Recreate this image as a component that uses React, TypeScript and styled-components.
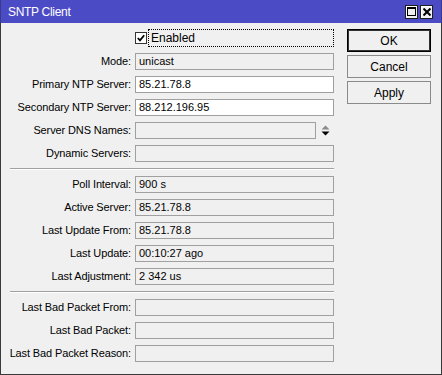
import React from "react";
import styled, { createGlobalStyle } from "styled-components";

const Global = createGlobalStyle`
  html, body { margin: 0; padding: 0; background: #f0f0f0; overflow: hidden; }
  * { box-sizing: border-box; }
`;

const Window = styled.div`
  width: 442px;
  height: 375px;
  border: 1px solid #3a3a3a;
  border-top: none;
  background: #f0f0f0;
  font-family: "Liberation Sans", Arial, sans-serif;
  font-size: 11px;
  color: #000;
  display: flex;
  flex-direction: column;
`;

const TitleBar = styled.div`
  height: 23px;
  margin: 0 -1px;
  background: #4b4bc6;
  display: flex;
  align-items: center;
  justify-content: space-between;
  padding: 0 8px 0 7px;
  border-left: 1px solid #3a3a8a;
  border-right: 1px solid #3a3a8a;
`;

const Title = styled.div`
  color: #fff;
  font-size: 12px;
  letter-spacing: -0.3px;
`;

const TitleButtons = styled.div`
  display: flex;
  gap: 2px;
`;

const TitleBtn = styled.div`
  width: 13px;
  height: 14px;
  background: #f0f0f0;
  border: 1px solid #1e1e1e;
  box-shadow: inset 1px 1px 0 #fff;
  display: flex;
  align-items: center;
  justify-content: center;
`;

const Body = styled.div`
  display: flex;
  gap: 13px;
  padding-top: 6px;
`;

const Form = styled.div`
  width: 333px;
  display: flex;
  flex-direction: column;
  gap: 6px;
`;

const Row = styled.div`
  display: grid;
  grid-template-columns: 130px 199px;
  column-gap: 4px;
  align-items: center;
`;

const Label = styled.div`
  text-align: right;
  white-space: nowrap;
  line-height: 17px;
  letter-spacing: -0.12px;
`;

const Field = styled.div<{ $editable?: boolean }>`
  height: 17px;
  border: 1px solid #a0a0a0;
  background: ${(p) => (p.$editable ? "#fff" : "#f0f0f0")};
  padding-left: 3px;
  line-height: 15px;
  white-space: nowrap;
  overflow: hidden;
  flex: 1;
`;

const FieldWrap = styled.div`
  display: flex;
  align-items: center;
`;

const Spinner = styled.div`
  width: 18px;
  display: flex;
  justify-content: center;
`;

const CheckRow = styled.div`
  display: flex;
  align-items: center;
  height: 18px;
`;

const CheckBox = styled.div`
  width: 12px;
  height: 12px;
  border: 1px solid #333;
  background: #fff;
  display: flex;
  align-items: center;
  justify-content: center;
  margin-right: 1px;
`;

const FocusLabel = styled.div`
  flex: 1;
  height: 18px;
  border: 1px dotted #000;
  padding-left: 2px;
  line-height: 16px;
  font-size: 12px;
`;

const Separator = styled.div`
  margin-left: 9px;
  height: 2px;
  border-top: 1px solid #a0a0a0;
  border-bottom: 1px solid #fff;
`;

const Actions = styled.div`
  width: 84px;
  display: flex;
  flex-direction: column;
  gap: 3px;
`;

const Button = styled.div<{ $default?: boolean }>`
  height: 23px;
  border: 1px solid ${(p) => (p.$default ? "#000" : "#8a8a8a")};
  box-shadow: ${(p) => (p.$default ? "inset 0 0 0 1px #333" : "none")};
  background: #f0f0f0;
  display: flex;
  align-items: center;
  justify-content: center;
  padding-top: 1px;
  font-size: 12px;
`;

type Item = { label: string; value?: string; editable?: boolean; spinner?: boolean };

const section1: Item[] = [
  { label: "Mode:", value: "unicast" },
  { label: "Primary NTP Server:", value: "85.21.78.8", editable: true },
  { label: "Secondary NTP Server:", value: "88.212.196.95", editable: true },
  { label: "Server DNS Names:", spinner: true },
  { label: "Dynamic Servers:" },
];

const section2: Item[] = [
  { label: "Poll Interval:", value: "900 s" },
  { label: "Active Server:", value: "85.21.78.8" },
  { label: "Last Update From:", value: "85.21.78.8" },
  { label: "Last Update:", value: "00:10:27 ago" },
  { label: "Last Adjustment:", value: "2 342 us" },
];

const section3: Item[] = [
  { label: "Last Bad Packet From:" },
  { label: "Last Bad Packet:" },
  { label: "Last Bad Packet Reason:" },
];

function FormRow({ item }: { item: Item }) {
  return (
    <Row>
      <Label>{item.label}</Label>
      {item.spinner ? (
        <FieldWrap>
          <Field $editable={item.editable}>{item.value}</Field>
          <Spinner>
            <svg width="9" height="11" viewBox="0 0 9 11">
              <path d="M4.5 0.5 L8.5 4.5 L0.5 4.5 Z" fill="#8a8a8a" />
              <path d="M0.5 6.5 L8.5 6.5 L4.5 10.5 Z" fill="#000" />
            </svg>
          </Spinner>
        </FieldWrap>
      ) : (
        <Field $editable={item.editable}>{item.value}</Field>
      )}
    </Row>
  );
}

export default function App() {
  return (
    <>
      <Global />
      <Window>
        <TitleBar>
          <Title>SNTP Client</Title>
          <TitleButtons>
            <TitleBtn>
              <svg width="9" height="9" viewBox="0 0 9 9">
                <rect x="0.5" y="0.5" width="8" height="8" fill="none" stroke="#000" />
                <rect x="0" y="0" width="9" height="2" fill="#000" />
              </svg>
            </TitleBtn>
            <TitleBtn>
              <svg width="8" height="8" viewBox="0 0 8 8">
                <path d="M0.5 0.5 L7.5 7.5 M7.5 0.5 L0.5 7.5" stroke="#000" strokeWidth="2" />
              </svg>
            </TitleBtn>
          </TitleButtons>
        </TitleBar>
        <Body>
          <Form>
            <Row>
              <Label />
              <CheckRow>
                <CheckBox>
                  <svg width="8" height="8" viewBox="0 0 8 8">
                    <path d="M0.8 4 L3 6.3 L7.2 1.2" fill="none" stroke="#000" strokeWidth="1.8" />
                  </svg>
                </CheckBox>
                <FocusLabel>Enabled</FocusLabel>
              </CheckRow>
            </Row>
            {section1.map((it) => (
              <FormRow key={it.label} item={it} />
            ))}
            <Separator />
            {section2.map((it) => (
              <FormRow key={it.label} item={it} />
            ))}
            <Separator />
            {section3.map((it) => (
              <FormRow key={it.label} item={it} />
            ))}
          </Form>
          <Actions>
            <Button $default>OK</Button>
            <Button>Cancel</Button>
            <Button>Apply</Button>
          </Actions>
        </Body>
      </Window>
    </>
  );
}
